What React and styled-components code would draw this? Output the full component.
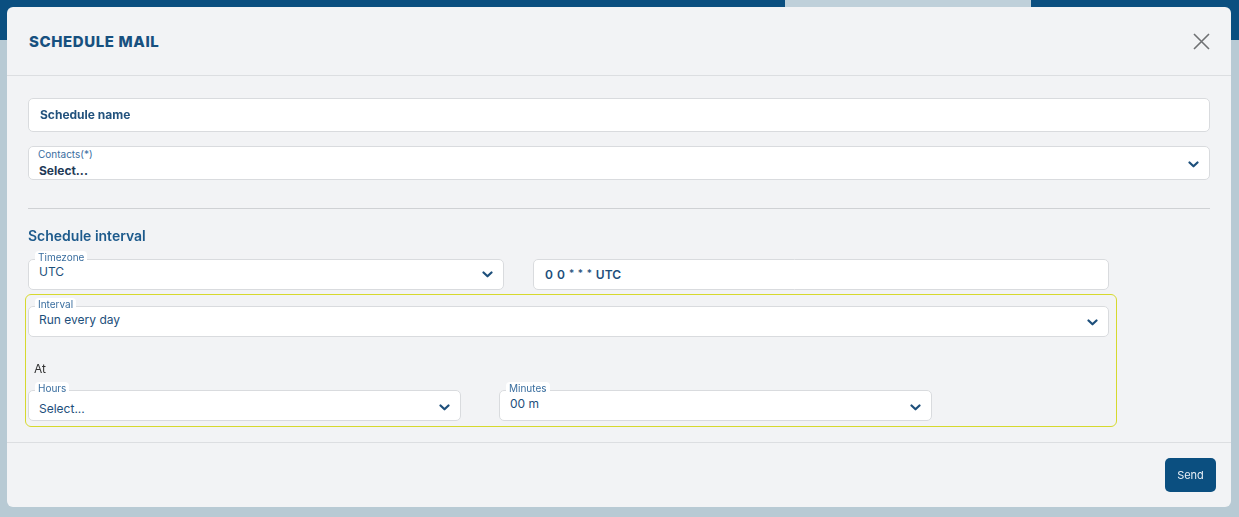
import styled, { createGlobalStyle } from "styled-components";

const GlobalStyle = createGlobalStyle`
    html, body {
        margin: 0;
        padding: 0;
    }
    body {
        width: 1239px;
        height: 517px;
        overflow: hidden;
        background: #b8cad4;
        font-family: Inter, "Noto Sans", sans-serif;
    }
`

const Backdrop = styled.div`
    height: 517px;
    display: flex;
    flex-direction: column;
`
const TopBar = styled.div`
    height: 40px;
    display: flex;
`
const BarPart = styled.div`
    width: ${({$w}) => $w ? `${$w}px` : "auto"};
    flex-grow: ${({$w}) => $w ? 0 : 1};
    background: ${({$light}) => $light ? "#bfd0da" : "#0b4f80"};
`

const Modal = styled.div`
    position: fixed;
    left: 7px;
    top: 7px;
    width: 1224px;
    height: 500px;
    background: #f2f3f5;
    border-radius: 6px;
    display: flex;
    flex-direction: column;
`
const Header = styled.div`
    height: 68px;
    padding: 0 21px 0 22px;
    display: flex;
    align-items: center;
    justify-content: space-between;
    border-bottom: 1px solid #dcdee1;
`
const Title = styled.h2`
    margin: 0;
    font-size: 15px;
    font-weight: 800;
    letter-spacing: 0.6px;
    color: #17507f;
`
const CloseButton = styled.button`
    border: none;
    background: none;
    padding: 0;
    width: 18px;
    height: 18px;
    display: flex;
    align-items: center;
    justify-content: center;
    cursor: pointer;
`
const Body = styled.div`
    padding: 22px 21px 15px 21px;
    display: flex;
    flex-direction: column;
    border-bottom: 1px solid #dcdee1;
`
const Field = styled.div`
    position: relative;
    height: ${({$h}) => $h || 30}px;
    width: ${({$w}) => $w ? `${$w}px` : "auto"};
    flex-shrink: 0;
    box-sizing: border-box;
    background: #fff;
    border: 1px solid #d9dbde;
    border-radius: 5px;
    display: flex;
    align-items: flex-start;
    justify-content: space-between;
    padding: 0 10px 0 10px;
    margin-top: ${({$mt}) => $mt || 0}px;
`
const Placeholder = styled.span`
    font-size: 12px;
    font-weight: 700;
    color: #22527d;
    line-height: 16px;
    margin-top: 8px;
    margin-left: 1px;
`
const InnerLabel = styled.span`
    position: absolute;
    left: 9px;
    top: 1px;
    font-size: 10px;
    color: #3a6e9f;
    line-height: 12px;
`
const FloatLabel = styled.span`
    position: absolute;
    left: 6px;
    top: -9px;
    padding: 0 3px;
    background: #fff;
    border-radius: 4px 4px 0 0;
    font-size: 10px;
    color: #3a6e9f;
    line-height: 12px;
`
const Value = styled.span`
    font-size: 12px;
    font-weight: ${({$bold}) => $bold ? 700 : 400};
    color: ${({$dark}) => $dark ? "#1f3b57" : "#1d4f7b"};
    line-height: 16px;
    margin-top: ${({$top}) => $top}px;
`
const Chevron = styled.svg`
    width: 11px;
    height: 7px;
    margin-top: ${({$top}) => $top}px;
    flex-shrink: 0;
`
const Divider = styled.hr`
    margin: 28px 0 0 0;
    border: none;
    border-top: 1px solid #cfd1d4;
`
const SectionTitle = styled.h3`
    margin: 18px 0 0 0;
    font-size: 14px;
    font-weight: 600;
    color: #1d5a8c;
    line-height: 18px;
`
const Row = styled.div`
    display: flex;
    gap: ${({$gap}) => $gap}px;
    margin-top: ${({$mt}) => $mt || 0}px;
`
const Cron = styled.span`
    font-size: 12px;
    font-weight: 600;
    color: #1d4f7b;
    line-height: 16px;
    margin-top: 5px;
    margin-left: 1px;
    word-spacing: 1px;
`
const Star = styled.span`
    font-size: 10px;
    font-weight: 500;
    vertical-align: 2px;
`
const IntervalBox = styled.div`
    margin: 4px 0 0 -3px;
    width: 1092px;
    box-sizing: border-box;
    border: 1.5px solid #d6d92e;
    border-radius: 6px;
    padding: 11px 7px 5px 2px;
    display: flex;
    flex-direction: column;
`
const AtLabel = styled.div`
    margin: 24px 0 0 6px;
    font-size: 12px;
    color: #333;
    line-height: 16px;
`
const Footer = styled.div`
    flex-grow: 1;
    display: flex;
    justify-content: flex-end;
    align-items: flex-start;
    padding: 15px 15px 0 0;
`
const SendButton = styled.button`
    width: 51px;
    height: 34px;
    border: none;
    border-radius: 5px;
    background: #0b4f80;
    color: #e6eef5;
    font-family: Inter, sans-serif;
    font-size: 11px;
    cursor: pointer;
`

const Down = ({top}) => (
    <Chevron $top={top} viewBox="0 0 11 7">
        <path d="M1.5 1.5 L5.5 5.3 L9.5 1.5" fill="none" stroke="#1d4f7b" strokeWidth="2.2" strokeLinecap="round" strokeLinejoin="round"/>
    </Chevron>
)

export default function App() {
    return (
        <>
            <GlobalStyle/>
            <Backdrop>
                <TopBar>
                    <BarPart $w={785}/>
                    <BarPart $w={246} $light/>
                    <BarPart/>
                </TopBar>
            </Backdrop>
            <Modal>
                <Header>
                    <Title>SCHEDULE MAIL</Title>
                    <CloseButton aria-label="close">
                        <svg width="17" height="17" viewBox="0 0 17 17">
                            <path d="M1 1 L16 16 M16 1 L1 16" stroke="#6f7173" strokeWidth="1.6"/>
                        </svg>
                    </CloseButton>
                </Header>
                <Body>
                    <Field $h={34}>
                        <Placeholder>Schedule name</Placeholder>
                    </Field>
                    <Field $h={34} $mt={14}>
                        <InnerLabel>Contacts(*)</InnerLabel>
                        <Value $bold $dark $top={16}>Select...</Value>
                        <Down top={14}/>
                    </Field>
                    <Divider/>
                    <SectionTitle>Schedule interval</SectionTitle>
                    <Row $gap={29} $mt={14}>
                        <Field $w={476} $h={31}>
                            <FloatLabel>Timezone</FloatLabel>
                            <Value $top={4}>UTC</Value>
                            <Down top={11}/>
                        </Field>
                        <Field $w={576} $h={31}>
                            <Cron>0 0 <Star>* * *</Star> UTC</Cron>
                        </Field>
                    </Row>
                    <IntervalBox>
                        <Field $h={31}>
                            <FloatLabel>Interval</FloatLabel>
                            <Value $top={5}>Run every day</Value>
                            <Down top={12}/>
                        </Field>
                        <AtLabel>At</AtLabel>
                        <Row $gap={38} $mt={13}>
                            <Field $w={433} $h={31}>
                                <FloatLabel>Hours</FloatLabel>
                                <Value $top={10}>Select...</Value>
                                <Down top={13}/>
                            </Field>
                            <Field $w={433} $h={31}>
                                <FloatLabel>Minutes</FloatLabel>
                                <Value $top={5}>00 m</Value>
                                <Down top={13}/>
                            </Field>
                        </Row>
                    </IntervalBox>
                </Body>
                <Footer>
                    <SendButton>Send</SendButton>
                </Footer>
            </Modal>
        </>
    )
}
